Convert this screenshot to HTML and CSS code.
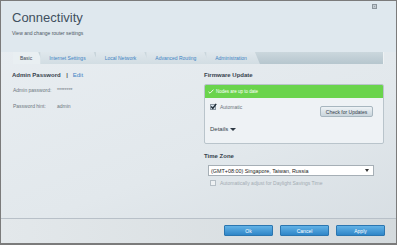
FILE: index.html
```html
<!DOCTYPE html>
<html lang="en">
<head>
    <meta charset="UTF-8">
    <title>Connectivity</title>
    <link rel="stylesheet" href="styles.css">
</head>
<body>
    <div class="window">
        <div class="header">
            <div>
                <h1>Connectivity</h1>
                <p class="subtitle">View and change router settings</p>
            </div>
            <span class="close"></span>
        </div>

        <div class="tabs">
            <span class="tab active">Basic</span>
            <span class="tab">Internet Settings</span>
            <span class="tab">Local Network</span>
            <span class="tab">Advanced Routing</span>
            <span class="tab">Administration</span>
        </div>

        <div class="content">
            <div class="col-left">
                <div class="heading">Admin Password <span class="bar">|</span> <a class="edit">Edit</a></div>
                <div class="row"><span class="label">Admin password:</span><span class="value">********</span></div>
                <div class="row"><span class="label">Password hint:</span><span class="value">admin</span></div>
            </div>

            <div class="col-right">
                <div class="heading">Firmware Update</div>
                <div class="fw-box">
                    <div class="fw-status">
                        <svg width="6" height="5" viewBox="0 0 6 5"><path d="M0.5 2.8 L2 4.2 L5.5 0.6" fill="none" stroke="#fff" stroke-width="0.9"/></svg>
                        Nodes are up to date
                    </div>
                    <div class="fw-body">
                        <div class="fw-row">
                            <label class="check-label">
                                <span class="check checked">
                                    <svg width="7" height="7" viewBox="0 0 7 7"><path d="M1.2 3.6 L2.8 5.3 L6.2 0.8" fill="none" stroke="#1d2a36" stroke-width="1.4"/></svg>
                                </span>
                                Automatic
                            </label>
                            <button class="btn-light">Check for Updates</button>
                        </div>
                        <div class="details">Details <span class="caret"></span></div>
                    </div>
                </div>

                <div class="heading tz-heading">Time Zone</div>
                <div class="select">
                    <span>(GMT+08:00) Singapore, Taiwan, Russia</span>
                    <span class="select-arrow"></span>
                </div>
                <label class="check-label disabled">
                    <span class="check"></span>
                    Automatically adjust for Daylight Savings Time
                </label>
            </div>
        </div>

        <div class="footer">
            <button class="btn-blue">Ok</button>
            <button class="btn-blue">Cancel</button>
            <button class="btn-blue">Apply</button>
        </div>
    </div>
</body>
</html>
```

FILE: styles.css
```css
* {
    box-sizing: border-box;
}
body {
    margin: 0;
    font-family: 'Liberation Sans', Arial, sans-serif;
    background: #777;
}
.window {
    width: 397px;
    height: 245px;
    border: 1px solid #7b7b7b;
    border-bottom-width: 2px;
    background: linear-gradient(160deg, #e9eef2 0%, #e2e8ec 60%, #d6dde2 100%);
    display: flex;
    flex-direction: column;
    overflow: hidden;
}
.header {
    height: 51px;
    padding: 9px 0 0 11px;
    background: #dfe8ee;
    display: flex;
    justify-content: space-between;
    align-items: flex-start;
}
h1 {
    margin: 0;
    font-size: 13px;
    line-height: 15px;
    font-weight: normal;
    color: #3f5060;
}
.subtitle {
    margin: 5px 0 0;
    font-size: 5px;
    line-height: 7px;
    color: #4b5763;
}
.close {
    width: 5px;
    height: 5px;
    margin: -6px 19px 0 0;
    background: #9aa5ad;
    border: 1px solid #8b959c;
    box-shadow: inset 0 0 0 1px #c2cad0;
}
.tabs {
    height: 12px;
    margin: 0 12px 0 12px;
    display: flex;
    background: linear-gradient(#cbd7dd, #b6c6ce);
    border-right: 1px solid #eef2f4;
}
.tab {
    height: 12px;
    display: flex;
    align-items: center;
    padding: 0 13px 0 9px;
    margin-right: -3px;
    font-size: 5px;
    color: #3d82c4;
    background: linear-gradient(#dfe7ec, #d2dde3);
    clip-path: polygon(0 0, calc(100% - 5px) 0, 100% 100%, 0 100%);
}
.tab.active {
    color: #3b4854;
    background: #e9eff2;
    padding: 0 11px 0 7px;
}
.content {
    flex: 1;
    display: grid;
    grid-template-columns: 192px 180px;
    padding: 7px 0 0 11px;
}
.heading {
    font-size: 6px;
    line-height: 8px;
    font-weight: bold;
    color: #36424d;
}
.bar {
    margin: 0 3px 0 4px;
    color: #555;
}
.edit {
    font-weight: normal;
    color: #3d82c4;
}
.row {
    display: flex;
    font-size: 5px;
    line-height: 7px;
    color: #6d7780;
    padding-left: 1px;
    margin-top: 8px;
}
.row + .row {
    margin-top: 9px;
}
.label {
    width: 44px;
}
.fw-box {
    margin-top: 5px;
    height: 60px;
    border: 1px solid #b9c4cb;
    border-radius: 2px;
    background: #eef2f5;
    overflow: hidden;
}
.fw-status {
    height: 13px;
    background: #6ad44c;
    color: #fff;
    font-size: 4.5px;
    display: flex;
    align-items: center;
    gap: 2px;
    padding-left: 3px;
}
.fw-body {
    padding: 6px 10px 0 5px;
}
.fw-row {
    display: flex;
    justify-content: space-between;
    align-items: flex-start;
}
.check-label {
    display: flex;
    align-items: center;
    gap: 4px;
    font-size: 5px;
    color: #6b747c;
}
.check {
    width: 6px;
    height: 6px;
    border: 1px solid #8c98a2;
    background: #fff;
    position: relative;
}
.check.checked {
    background: #d6e2ec;
}
.check svg {
    position: absolute;
    left: -1px;
    top: -2px;
}
.btn-light {
    width: 53px;
    height: 11px;
    margin-top: 2px;
    padding: 0;
    font-family: inherit;
    font-size: 5px;
    color: #33404b;
    border: 1px solid #a7b6bf;
    border-radius: 2px;
    background: linear-gradient(#eef3f6, #c9d5dc);
}
.details {
    margin-top: 9px;
    font-size: 6px;
    color: #36424d;
    display: flex;
    align-items: center;
    gap: 2px;
}
.caret {
    width: 0;
    height: 0;
    border-left: 3px solid transparent;
    border-right: 3px solid transparent;
    border-top: 3px solid #2d3944;
}
.tz-heading {
    margin-top: 8px;
}
.select {
    margin: 5px 10px 0 4px;
    height: 11px;
    background: #fff;
    border: 1px solid #a6afb6;
    display: flex;
    justify-content: space-between;
    align-items: center;
    padding: 0 4px 0 2px;
    font-size: 5.4px;
    color: #222;
}
.select-arrow {
    width: 0;
    height: 0;
    border-left: 2px solid transparent;
    border-right: 2px solid transparent;
    border-top: 3px solid #333;
}
.check-label.disabled {
    margin: 4px 0 0 6px;
    color: #a3acb3;
}
.check-label.disabled .check {
    border-color: #b5bec5;
    background: #eef1f3;
}
.footer {
    height: 25px;
    border-top: 1px solid #b8c0c8;
    background: linear-gradient(90deg, #e3e8eb, #d4dadd);
    display: flex;
    justify-content: flex-end;
    gap: 7px;
    padding: 6px 11px 0 0;
}
.btn-blue {
    width: 49px;
    height: 11px;
    padding: 0;
    font-family: inherit;
    font-size: 5px;
    color: #fff;
    border: 1px solid #2b76b0;
    border-radius: 1px;
    background: linear-gradient(#62b2e6, #2f86c8);
}
```
